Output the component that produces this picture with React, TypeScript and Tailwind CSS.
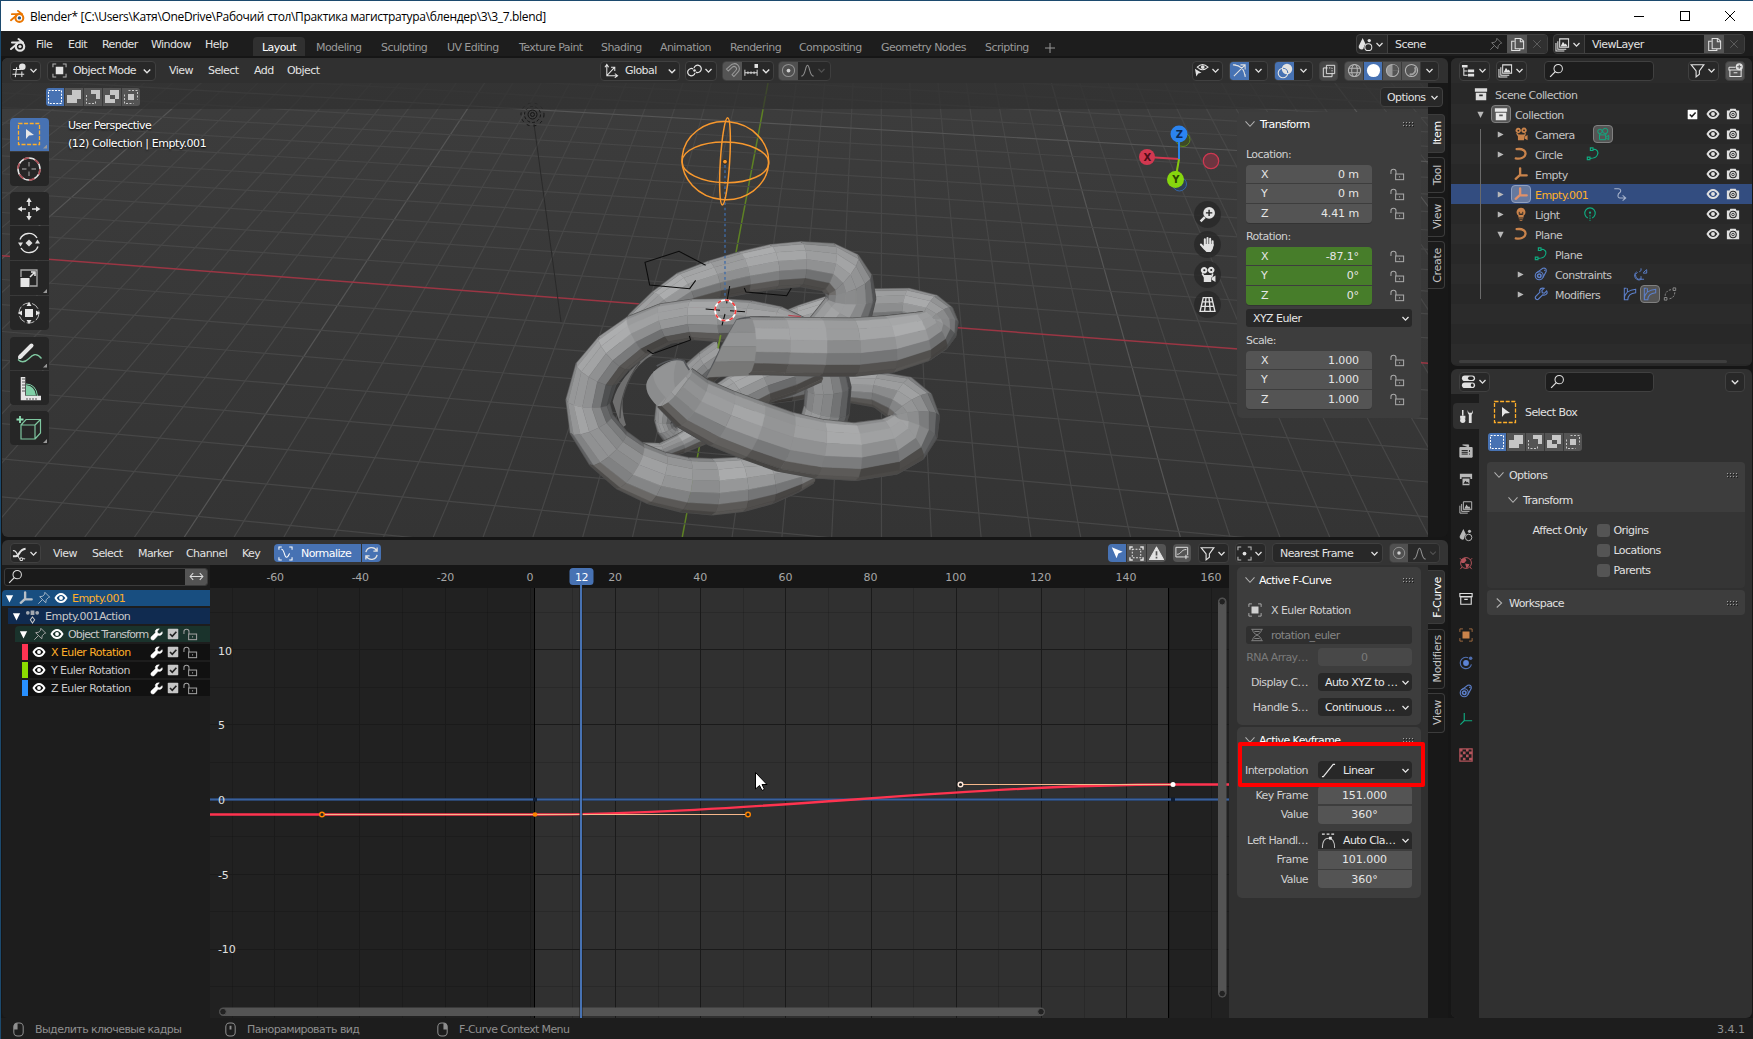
import React from "react";

type Kids = { children?: React.ReactNode };

/* ---------- icons (16 unit grid) ---------- */
const ICONS: Record<string, React.ReactNode> = {
  chev: <path d="M4.300 6.200 8 10l3.700-3.800" strokeWidth="1.600" />,
  chevBig: <path d="M2 4.500l6 6.500 6-6.500" strokeWidth="1.400" />,
  chevRight: <path d="M5 2l6.500 6L5 14" strokeWidth="1.400" />,
  triDown: <path d="M3.500 4h9L8 13z" fill="currentColor" stroke="none" />,
  triRight: <path d="M4 3.500v9L12.500 8z" fill="currentColor" stroke="none" />,
  eye: (
    <>
      <path d="M1.800 8C3.600 4.700 5.600 3.400 8 3.400s4.400 1.300 6.200 4.600c-1.800 3.300-3.800 4.600-6.200 4.600S3.600 11.300 1.800 8Z" strokeWidth="2.200" />
      <circle cx="8" cy="8" r="2.200" fill="currentColor" stroke="none" />
    </>
  ),
  photo: (
    <>
      <path d="M1 4h3l1-2h6l1 2h3v10H1z" fill="currentColor" stroke="none" />
      <circle cx="8" cy="8.600" r="3.700" stroke="#282828" strokeWidth="1.300" />
      <circle cx="8" cy="8.600" r="1.500" stroke="#282828" strokeWidth="1" />
    </>
  ),
  lock: (
    <>
      <rect x="6" y="7.500" width="8.500" height="6" />
      <path d="M1 7.500V5q0-2.500 2.700-2.500T6.400 5v2.500M10.200 9.800v1.500" />
    </>
  ),
  search: (
    <>
      <circle cx="9.800" cy="6" r="4.500" />
      <path d="M6.700 9.200 1.200 14.800" strokeWidth="1.300" />
    </>
  ),
  pin: <path d="M9 1.500 14.500 7l-1.500.5-2.500 2.500-.5 3.500L3 6.500l3.500-.5L8.800 3.500ZM6 10 1.500 14.500" />,
  copy: (
    <>
      <path d="M5.500 1.500h6l3 3v8h-9z" />
      <path d="M11 1.500v3.500h3.500M5 4.500H1.800v10h8.700v-1.700" />
    </>
  ),
  x: <path d="M3 3l10 10M13 3 3 13" />,
  swap: <path d="M1.500 8h13M4.500 4.500 1.200 8l3.300 3.500M11.500 4.500 14.800 8l-3.300 3.500" />,
  funnel: <path d="M1.200 1.800h13.600L10 8.500V12l-3.500 2.800V8.500z" strokeWidth="1.200" />,
  tree: (
    <>
      <path d="M3 5v8h4M3 8.500h4" />
      <path d="M1 2h6v2.800H1zM7.500 7H14v2.800H7.500zM7.500 11.500H14v2.800H7.500z" fill="currentColor" stroke="none" />
    </>
  ),
  stack: (
    <>
      <path d="M5 2h9.500v9H5zM3 4.500V13h9M1 6.500V15h9" />
      <path d="M6 10l2.500-5 2 3 1-1 2 3z" fill="currentColor" stroke="none" />
    </>
  ),
  scene: (
    <>
      <path d="M5 1 .8 9.500q-.5 3.500 3.500 3.800Q6 13.300 6 11.500 6.500 8.500 8 7.500z" fill="currentColor" stroke="none" />
      <circle cx="11" cy="10.800" r="3.700" />
      <circle cx="12" cy="3.800" r="1.800" fill="currentColor" stroke="none" />
    </>
  ),
  view3d: (
    <>
      <path d="M1 7h9M0.500 12h12.500M5 4.500 3.500 15M10.500 9v6" />
      <circle cx="11" cy="4" r="3.500" fill="currentColor" stroke="none" />
    </>
  ),
  object: (
    <>
      <rect x="4" y="4" width="8" height="8" fill="currentColor" stroke="none" />
      <path d="M1 4.500V1h3.500M11.500 1H15v3.500M15 11.500V15h-3.500M4.500 15H1v-3.500" opacity=".75" />
    </>
  ),
  axes: <path d="M3 14V2M1 4.500 3 1.500l2 3M3 13.500h11M11.500 11.300l3 2.200-3 2.200M3 13.500 11 5M7.500 4.500H11.500V8.500" />,
  pivot: (
    <>
      <path d="M8.500 10.500a3.900 3.900 0 1 1-2-4.200M7.500 5.500a3.900 3.900 0 1 1 2 4.200" strokeWidth="1.300" />
      <circle cx="8" cy="8" r="1.400" fill="currentColor" stroke="none" />
    </>
  ),
  magnet: <path d="M1.500 6.500 6 2.500a5.300 5.300 0 0 1 8 7l-4.500 5-2-2 4-4.500a2.500 2.500 0 0 0-3.700-3.500L3.500 8.500z" />,
  snap: (
    <>
      <path d="M1 6.500v7M1 10h14M4.500 8.500v3M8 8.500v3M11.500 8.500v3M15 6.500v7" />
      <rect x="12" y="0" width="4" height="4.500" fill="currentColor" stroke="none" />
    </>
  ),
  prop: (
    <>
      <circle cx="8" cy="8" r="6.500" opacity=".5" />
      <circle cx="8" cy="8" r="2" fill="currentColor" stroke="none" />
    </>
  ),
  curveA: <path d="M1.500 14C6 14 5.500 2.500 8 2.500S10 14 14.500 14" />,
  visib: (
    <>
      <path d="M3.500 4.500Q9 -1.500 15 4.500 9 10 3.500 4.500Z" />
      <circle cx="9.300" cy="4.300" r="2" fill="currentColor" stroke="none" />
      <path d="M1 6l7 4.500-3.500.8L2.500 14.500z" fill="currentColor" stroke="none" />
    </>
  ),
  gizmo: <path d="M2 2c7 .5 11 4.500 12 12M2 14 14 2M9 2h5v5M1 2h3M14 12v3" />,
  overlay: (
    <>
      <circle cx="6" cy="10" r="4.800" />
      <circle cx="10" cy="6" r="5.200" fill="currentColor" stroke="none" />
      <path d="M6 5.300A4.800 4.800 0 0 1 10.800 10" stroke="#4772b3" />
    </>
  ),
  xray: (
    <>
      <path d="M5 1.500h9.500V11H5zM5 4.500H1.500v10h10V11" />
      <path d="M5 4.500h6.500V11" strokeDasharray="1.500 1.500" />
    </>
  ),
  wire: (
    <>
      <circle cx="8" cy="8" r="6.500" />
      <ellipse cx="8" cy="8" rx="3" ry="6.500" />
      <path d="M2 5.500h12M2 10.500h12" />
    </>
  ),
  solid: <circle cx="8" cy="8" r="7" fill="currentColor" stroke="none" />,
  matp: (
    <>
      <circle cx="8" cy="8" r="6.500" />
      <path d="M8 1.500A6.500 6.500 0 0 0 8 14.500L8 8h6.500A6.500 6.500 0 0 0 8 1.500" fill="currentColor" opacity=".7" stroke="none" />
      <path d="M8 8V1.500A6.500 6.500 0 0 1 14.500 8z" fill="#555" stroke="none" />
    </>
  ),
  rend: (
    <>
      <circle cx="8" cy="8" r="6.500" />
      <path d="M11.500 4.500A5 5 0 0 1 6 12" opacity=".8" strokeWidth="2" />
    </>
  ),
  coll: (
    <>
      <path d="M1 1.500h14v4H1z" fill="currentColor" stroke="none" />
      <path d="M2 6.700h12V15H2zM6 8.500v2h4v-2z" fill="currentColor" fillRule="evenodd" stroke="none" />
    </>
  ),
  collLine: <path d="M1 1.700h14v3.600H1zM2 5.500h12V14H2zM6 8.500h4" strokeWidth="1.300" />,
  newColl: (
    <>
      <path d="M1 4.500h7M1 4.500v3h14M2 7.500h12v7H2zM6 10.500h4" />
      <circle cx="12" cy="4" r="3.800" fill="currentColor" stroke="none" />
      <path d="M12 1.800v4.400M9.800 4h4.400" stroke="#555" />
    </>
  ),
  cam: (
    <>
      <path d="M4.900.9a3.100 3.100 0 1 1-.1 0zM11.500.7a3.100 3.100 0 1 1-.1 0zM4.500 8.500h7V15h-7zM12 11l3.500-2v6L12 13z" fill="currentColor" stroke="none" />
      <path d="M3 7l2 3h7l1-3" strokeWidth="1.500" />
      <circle cx="5" cy="4" r="1" fill="#222" stroke="none" />
      <circle cx="11.500" cy="3.800" r="1" fill="#222" stroke="none" />
    </>
  ),
  camLine: (
    <>
      <circle cx="4.500" cy="5" r="2.500" />
      <circle cx="10.500" cy="4.500" r="3" />
      <path d="M4 9h7v5.500H4zM11.500 11.500l3-2v5l-3-2M3 7.500 5 9M12 7.500 11 9" />
    </>
  ),
  curve: <path d="M3 2.500c7-1 11 2 10 6S7 14 2 13" strokeWidth="2.600" strokeLinecap="round" />,
  curveLine: <path d="M8 2.500c5 0 6.500 3 5 6.500S8 13 5 13M5 1h3v3H5zM1.500 11.500h3v3h-3z" strokeWidth="1.300" />,
  empty: <path d="M7 1.500V9l-5 4.500M7 9.500h7.500" strokeWidth="2.700" strokeLinecap="round" strokeLinejoin="round" />,
  emptyLine: <path d="M6 1v9L1.500 14.500M6 10h9" strokeWidth="1.300" />,
  action: <path d="M1.500 2h4.500c3.500 0 3.500 3.500 1.500 4.500s-3 6 .5 6h6M11 9.500l3.500 3-3.500 3" strokeWidth="1.200" />,
  bulb: (
    <>
      <path d="M8 .8a5.200 5.200 0 0 1 3 9.300V12H5v-1.900A5.200 5.200 0 0 1 8 .8ZM5.500 13h5v1h-5zM6.500 14.800h3v1h-3z" fill="currentColor" stroke="none" />
      <path d="M6 5.500v3h4v-3M8 8.500V7" stroke="#282828" />
    </>
  ),
  bulbLine: (
    <>
      <path d="M5.500 12.500A6 6 0 1 1 10.500 12.500" strokeWidth="1.300" />
      <circle cx="8" cy="6.500" r="1.300" fill="currentColor" stroke="none" />
      <path d="M8 9v7" strokeDasharray="2 1" />
    </>
  ),
  constraint: (
    <>
      <circle cx="6" cy="10" r="4.600" strokeWidth="1.300" />
      <circle cx="6" cy="10" r="2" strokeWidth="1.800" />
      <path d="M2.500 7 10 1.500q4.500-1 4 3.500L10.300 12M12.300 3v1.500" strokeWidth="1.300" />
    </>
  ),
  wrench: (
    <path d="M14.500 4.500 12 7 9.500 6.500 9 4l2.500-2.500Q7.500.5 6.500 3.500q0 1.500.3 2.300L1.800 11q-.8 1.500.4 2.800 1.300 1 2.700.2L10 9q3.500.8 4.800-1.500.5-1.500-.3-3Z" strokeWidth="1.300" />
  ),
  wrenchF: (
    <path d="M15 4.500 12 7 9.500 6.500 9 4l2.500-3Q7.500.5 6.500 3.500q0 1.500.3 2.300L1.300 11q-.8 1.500.4 3.300 1.800 1 3.200.2L10 9q3.500.8 4.800-1.500.7-1.500.2-3Z" fill="currentColor" stroke="currentColor" strokeWidth=".600" />
  ),
  check: (
    <>
      <rect x="1" y="1" width="14" height="14" rx="1" fill="currentColor" stroke="none" />
      <path d="M4 8l3 3 5.500-6" stroke="#222" strokeWidth="2.200" />
    </>
  ),
  follow: <path d="M8 1.500a3 3 0 0 1-2 4M3 5.500a5 5 0 0 0 5.500 8.500M14.500 3v4h-4M10.500 6.500l4-3.500M8 10.500v3.500h3.500M4 6a4 4 0 0 0 4 7.500" />,
  bend: <path d="M4 1.500H1.500v13M1.500 14.500C1.500 7 7 3 14.500 2.500v4C9 7 5.500 10 5.500 14.500zM5 1.500v4" strokeWidth="1.200" />,
  dots: (
    <>
      <path d="M1.500 12h3v3h-3zM11.500 1h3v3h-3z" />
      <path d="M13.500 6c0 4.500-3 7.500-7 7.500M2.500 10C2.500 6 6 3 10 3" strokeDasharray="2.500 1.500" />
    </>
  ),
  toolset: (
    <>
      <path d="M4 1v6M2 8h4v1.500H2z" strokeWidth="1.600" />
      <circle cx="4" cy="12" r="2.800" fill="currentColor" stroke="none" />
      <path d="M9 1q0 4 1.500 5v9h3V6Q15 5 15 1l-1.500 3h-3z" fill="currentColor" stroke="none" />
    </>
  ),
  renderP: (
    <>
      <path d="M4 1h7v3M1 4h14v11H1z" fill="currentColor" stroke="currentColor" />
      <path d="M3 7.500h7M3 9.500h7M3 11.500h7M12 7v2M12 11v1" stroke="#1d1d1d" />
    </>
  ),
  output: (
    <>
      <path d="M1 2h14v4H1zM1 5h2v3H1zM13 5h2v3h-2zM4 7.500h8V15H4z" fill="currentColor" stroke="none" />
      <path d="M5 13.500 7.500 10l1.500 2 1-.800 1.500 2.300z" fill="#1d1d1d" stroke="none" />
    </>
  ),
  world: (
    <>
      <circle cx="8" cy="8" r="6.200" />
      <path d="M3 3.500l4-1.500 1.500 3L6 8H3.500L2 7zM7 8.500l5 1-1.500 3-2 1.500z" fill="currentColor" stroke="none" />
      <path d="M1 2.500l2 2M15 2.500 13 4.500M3.500 12.500 1.500 15M12.500 12.500l2 2.500" />
    </>
  ),
  physics: (
    <>
      <path d="M10.500 2A6.500 6.500 0 1 0 14.200 9.500" opacity=".8" strokeWidth="1.300" />
      <circle cx="8" cy="8" r="3.300" fill="currentColor" stroke="none" />
      <circle cx="13.300" cy="2.500" r="2" fill="currentColor" stroke="none" opacity=".8" />
    </>
  ),
  texture: (
    <>
      <rect x="1" y="1" width="14" height="14" strokeWidth="1.400" />
      <path d="M1 1h3v3H1zM8 1h3v3H8zM4.500 4h3v3h-3zM11.500 4H15v3h-3.500zM1 7.500h3v3H1zM8 7.500h3v3H8zM4.500 11h3v3h-3zM11.500 11H15v3h-3.500z" fill="currentColor" stroke="none" />
    </>
  ),
  props: (
    <>
      <rect x="1" y="1.500" width="14" height="6" rx="3" fill="currentColor" stroke="none" />
      <rect x="1" y="9" width="14" height="6" rx="3" fill="currentColor" stroke="none" />
      <rect x="7.500" y="2.700" width="6" height="3.600" rx="1.800" fill="#222" stroke="none" />
      <rect x="10.500" y="10.200" width="3" height="3.600" rx="1.500" fill="#222" stroke="none" />
    </>
  ),
  graph: (
    <>
      <path d="M1 11h3c4 0 3-7 10.500-8" strokeWidth="2.200" />
      <path d="M1 5c5-1 5 8 7.500 9M12 13l2 1" />
      <circle cx="10" cy="14" r="1.500" />
    </>
  ),
  norm: <path d="M1 4V1h3M12 1h3v3M15 12v3h-3M4 15H1v-3M3.500 3.500C7 3 6.500 12 9 12s2-3 3.500-4" />,
  refresh: <path d="M2 6.500A6.200 6.200 0 0 1 13.500 5M14 9.500A6.200 6.200 0 0 1 2.500 11M14 1.500V5.500H10M2 14.500v-4h4" strokeWidth="1.400" />,
  arrow: <path d="M2 1.500 14.500 6.500 9.500 8.500 7.500 14z" fill="currentColor" stroke="none" />,
  selBox: (
    <>
      <path d="M1 4V1h3M12 1h3v3M15 12v3h-3M4 15H1v-3" strokeWidth="1.500" />
      <rect x="3.500" y="3.500" width="9" height="9" strokeDasharray="2 1.500" />
    </>
  ),
  warn: (
    <>
      <path d="M8 1 15.500 14.500H.5z" fill="currentColor" stroke="currentColor" strokeLinejoin="round" />
      <path d="M8 5.500v4.500M8 11.500v1.800" stroke="#555" strokeWidth="1.800" />
    </>
  ),
  ghost: <path d="M1 1.500h13.500v9M1 1.500v11h9M2.500 9.500C7 9.500 7 4 13 4M12.500 10v5M10 12.500h5.500" />,
  dotBox: (
    <>
      <path d="M1 4.500V1h3.500M11.500 1H15v3.500M15 11.500V15h-3.500M4.500 15H1v-3.500" opacity=".8" />
      <circle cx="8" cy="8" r="2" fill="currentColor" stroke="none" />
    </>
  ),
  rna: <path d="M1.500 1.500h13M1.500 14.500h13M3 2c0 6 10 6 10 12M13 2C13 8 3 8 3 14M5 4h6M5 12h6" />,
  linear: <path d="M1 14.500h1.500L13 1.500h2" strokeWidth="1.300" />,
  auto: (
    <>
      <path d="M1.500 16C1.500 8 4.500 5.500 8 5.500s6.500 2.500 6.500 10.500" opacity=".8" />
      <path d="M1 1.200h3M6 1.200h3M11 1.200h3" strokeWidth="1.400" />
      <rect x="8.500" y="4" width="3" height="3" fill="currentColor" stroke="none" />
    </>
  ),
  blender: (
    <>
      <circle cx="10" cy="9.500" r="4.200" strokeWidth="2.200" />
      <circle cx="10" cy="9.500" r="1.600" fill="currentColor" stroke="none" />
      <path d="M8.500 2 13 5.500M2 5.500h8M1 12l6-5" strokeWidth="2" strokeLinecap="round" />
    </>
  ),
  actionIc: (
    <>
      <path d="M1 4a2 2 0 1 1 4 0 2 2 0 1 1-4 0M11 4a2 2 0 1 1 4 0 2 2 0 1 1-4 0M6 1.500h4v5H6z" fill="currentColor" stroke="none" opacity=".8" />
      <path d="M8 8.500l2.300 3L8 15l-2.300-3.500z" />
    </>
  ),
  mouseL: (
    <>
      <rect x="3" y="1" width="10" height="14" rx="4" />
      <path d="M3 8V4q0-3 4-3v7z" fill="currentColor" stroke="none" />
    </>
  ),
  mouseM: (
    <>
      <rect x="3" y="1" width="10" height="14" rx="4" />
      <path d="M7 4h2v4H7z" fill="currentColor" stroke="none" />
    </>
  ),
  mouseR: (
    <>
      <rect x="3" y="1" width="10" height="14" rx="4" />
      <path d="M13 8V4q0-3-4-3v7z" fill="currentColor" stroke="none" />
    </>
  ),
};

function Ic({ n, className = "size-[15px]" }: { n: string; className?: string }) {
  return (
    <svg viewBox="0 0 16 16" fill="none" stroke="currentColor" strokeWidth="1.100" className={`shrink-0 ${className}`}>
      {ICONS[n]}
    </svg>
  );
}

function Grip() {
  return (
    <svg viewBox="0 0 11 5" className="ml-auto mr-[7px] h-[5px] w-[11px] shrink-0" shapeRendering="crispEdges">
      {[0, 3, 6, 9].map((x) => (
        <g key={x}>
          <path d={`M${x + 1} 1h1v1h-1zM${x + 1} 4h1v1h-1z`} fill="#1c1c1c" />
          <path d={`M${x} 0h1v1h-1zM${x} 3h1v1h-1z`} fill="#a0a0a0" />
        </g>
      ))}
    </svg>
  );
}

function Box({ className = "", children }: Kids & { className?: string }) {
  return (
    <div className={`flex shrink-0 items-center overflow-hidden rounded-[4px] border border-[#404040] bg-[#282828] ${className}`}>{children}</div>
  );
}

function IconDrop({ n, className = "w-[31px]" }: { n: string; className?: string }) {
  return (
    <Box className={`h-5 justify-center ${className}`}>
      <Ic n={n} />
      <Ic n="chev" className="size-[13px]" />
    </Box>
  );
}

/* ---------- viewport scene ---------- */
const HORIZON = -516.7;
const GRID_X = Array.from({ length: 75 }, (_, i) => i - 42).map((k) => ({
  k,
  x2: 682.3 + 49.8 * k,
}));
const GRID_Y = Array.from({ length: 30 }, (_, i) => i - 12).map((m) => {
  const d = 1 / (0.0012092 + 0.00003545 * m);
  const y = HORIZON + d;
  const x = 682.3 - 0.1888 * (y - 537);
  const s = d / (x + 10258);
  return { m, y1: y + (0 - x) * s, y2: y + (1440 - x) * s };
});

type P3 = [number, number, number];

function spline(pts: P3[], step: number): P3[] {
  const out: P3[] = [];
  for (let i = 0; i < pts.length - 1; i++) {
    const a = pts[Math.max(0, i - 1)];
    const b = pts[i];
    const c = pts[i + 1];
    const d = pts[Math.min(pts.length - 1, i + 2)];
    for (let s = 0; s < 12; s++) {
      const t = s / 12;
      const f = (k: number) =>
        0.5 * (2 * b[k] + (c[k] - a[k]) * t + (2 * a[k] - 5 * b[k] + 4 * c[k] - d[k]) * t * t + (3 * b[k] - a[k] - 3 * c[k] + d[k]) * t * t * t);
      out.push([f(0), f(1), f(2)]);
    }
  }
  out.push(pts[pts.length - 1]);
  const res: P3[] = [out[0]];
  let acc = 0;
  let dir = Math.atan2(out[1][1] - out[0][1], out[1][0] - out[0][0]);
  for (let i = 1; i < out.length; i++) {
    const dx = out[i][0] - out[i - 1][0];
    const dy = out[i][1] - out[i - 1][1];
    acc += Math.hypot(dx, dy);
    const now = Math.atan2(dy, dx);
    let turn = Math.abs(now - dir);
    if (turn > Math.PI) turn = 2 * Math.PI - turn;
    if (acc >= step || turn > 0.42) {
      res.push(out[i]);
      acc = 0;
      dir = now;
    }
  }
  if (acc > step * 0.2) res.push(out[out.length - 1]);
  return res;
}

type TubeProps = { pts: P3[]; step?: number; bulge?: number; dim?: number; seed?: number; from?: (p: P3) => boolean };

function Tube({ pts, step = 70, bulge = 0.28, dim = 0, seed = 1, from }: TubeProps) {
  const c = spline(pts, step);
  const start = from ? Math.max(0, c.findIndex(from)) : 0;
  const N = 7;
  const rings = c.map((p, i) => {
    const a = c[Math.max(0, i - 1)];
    const b = c[Math.min(c.length - 1, i + 1)];
    const l = Math.hypot(b[0] - a[0], b[1] - a[1]) || 1;
    const tx = (b[0] - a[0]) / l;
    const ty = (b[1] - a[1]) / l;
    return Array.from({ length: N + 1 }, (_, j) => {
      const th = (Math.PI * j) / N;
      const co = Math.cos(th);
      const si = Math.sin(th);
      return { x: p[0] + -ty * p[2] * co + tx * p[2] * bulge * si, y: p[1] + tx * p[2] * co + ty * p[2] * bulge * si, nx: -ty, ny: tx };
    });
  });
  const segs: React.ReactNode[] = [];
  for (let i = start; i < rings.length - 1; i++) {
    const e = (j: number) => `${rings[i][j].x.toFixed(1)},${rings[i][j].y.toFixed(1)} ${rings[i + 1][j].x.toFixed(1)},${rings[i + 1][j].y.toFixed(1)}`;
    segs.push(
      <g key={`e${i}`} fill="none" stroke="#4c4c4c" strokeWidth="5">
        <polyline points={e(0)} />
        <polyline points={e(N)} />
      </g>,
    );
    for (let j = 0; j < N; j++) {
      const th = (Math.PI * (j + 0.5)) / N;
      const q = rings[i][j];
      const nx = q.nx * Math.cos(th);
      const ny = q.ny * Math.cos(th);
      const nz = Math.sin(th);
      const li = Math.max(0, -0.3 * nx - 0.55 * ny + 0.78 * nz);
      const wob = ((i * 5 + seed) % 3) * 6 - 6 + (((i * 7 + j * 3 + seed * 5) % 4) - 1.5) * 2;
      const v = Math.round(Math.min(184, 78 + 88 * Math.pow(li, 0.95) + wob - dim));
      const pt = [q, rings[i][j + 1], rings[i + 1][j + 1], rings[i + 1][j]].map((o) => `${o.x.toFixed(1)},${o.y.toFixed(1)}`).join(" ");
      const col = ny > 0.5 ? `rgb(${v},${v - 2},${v - 4})` : `rgb(${v},${v + 1},${v + 2})`;
      segs.push(<polygon key={`${i}-${j}`} points={pt} fill={col} stroke={col} strokeWidth="1.200" />);
    }
  }
  return <g>{segs}</g>;
}

const UPPER: P3[] = [
  [690, 716, 32], [780, 690, 42], [860, 665, 48], [1000, 655, 58], [1080, 651, 57], [1140, 660, 58], [1180, 682, 62], [1192, 708, 62], [1165, 732, 70],
  [1090, 755, 82], [980, 770, 86], [860, 771, 87], [740, 769, 86], [628, 767, 85],
];
const LOWER: P3[] = [
  [910, 893, 40], [1000, 897, 50], [1055, 910, 64], [1095, 935, 72], [1118, 970, 77], [1118, 1015, 77], [1090, 1050, 82],
  [1020, 1077, 85], [900, 1084, 86], [745, 1058, 90], [630, 1018, 90], [545, 985, 88], [450, 935, 82], [405, 893, 76],
];

function SceneView() {
  const capL = [[590, 690], [568, 728], [545, 770], [525, 815], [500, 862]];
  const capR = [[690, 683], [710, 725], [715, 770], [710, 815], [690, 854]];
  const capC = ["#8b8c8d", "#939495", "#898a8a", "#777776"];
  return (
    <svg viewBox="2 58 1426 479" className="absolute left-0 top-0 h-[479px] w-[1426px]">
      <defs>
        <linearGradient id="bg" x1="0" y1="0" x2="0" y2="1">
          <stop offset="0" stopColor="#3d3d3d" />
          <stop offset="1" stopColor="#343434" />
        </linearGradient>
      </defs>
      <rect x="2" y="58" width="1426" height="479" fill="url(#bg)" />
      {GRID_X.map(({ k, x2 }) => (
        <line key={k} x1="881.200" y1={HORIZON} x2={x2} y2="537" strokeWidth={k === 0 ? 1.5 : 1.2} stroke={k === 0 ? "#5e8224" : k % 10 === 0 ? "#565656" : "#474747"} />
      ))}
      {GRID_Y.map(({ m, y1, y2 }) => (
        <line key={m} x1="0" y1={y1} x2="1440" y2={y2} strokeWidth={m === 0 ? 1.5 : 1.2} stroke={m === 0 ? "#9b3644" : m % 10 === 0 ? "#565656" : "#474747"} />
      ))}
      <path d="M534 124 L561 322" stroke="#2a2a2a" strokeWidth="1" fill="none" />
      <g fill="none" stroke="#161616" strokeWidth="1">
        <circle cx="532.500" cy="114.500" r="2" />
        <circle cx="532.500" cy="114.500" r="4.500" />
        <circle cx="532.500" cy="114.500" r="8" strokeDasharray="3 2" />
        <circle cx="532.500" cy="114.500" r="11.500" strokeDasharray="3 4" />
      </g>
      <g transform="translate(540 90) scale(.33333)">
        <path d="M335 785Q235 860 218 935L245 1015 258 1005Q235 940 262 880T345 790Z" fill="#6f6f6f" />
        <path d="M300 815Q240 900 240 985" stroke="#4c4c4c" strokeWidth="4" fill="none" />
        <Tube pts={UPPER} bulge={-0.25} step={100} seed={3} />
        <Tube pts={[[250, 775, 40], [310, 700, 50], [380, 638, 52], [450, 592, 55], [560, 560, 60], [680, 533, 66], [790, 522, 67], [860, 530, 72], [905, 553, 76], [930, 595, 74], [930, 645, 74], [905, 690, 78], [870, 735, 78]]} step={82} />
        <Tube pts={[[560, 790, 50], [480, 845, 46], [430, 905, 50], [385, 960, 40], [374, 1000, 28], [395, 1035, 28], [450, 1040, 28]]} dim={10} step={60} />
        <Tube pts={[[300, 1088, 30], [370, 1083, 24], [440, 1052, 30], [520, 1010, 36], [600, 960, 36]]} dim={6} step={60} />
        <Tube pts={[[650, 930, 12], [720, 915, 22], [800, 890, 34]]} dim={18} step={50} />
        <Tube pts={LOWER} bulge={-0.25} step={98} seed={4} />
        <Tube pts={[[852, 830, 64], [865, 900, 68], [860, 960, 68], [835, 1040, 66]]} step={62} dim={8} />
        <Tube pts={[[820, 820, 60], [730, 860, 60], [640, 890, 62], [540, 950, 62], [440, 1010, 40]]} bulge={-0.25} dim={3} step={80} />
        <Tube pts={[[800, 720, 30], [730, 700, 45], [640, 692, 58], [550, 691, 64], [430, 690, 59], [340, 714, 62], [250, 765, 65], [172, 845, 67], [143, 935, 65], [160, 1015, 70], [215, 1085, 75], [290, 1140, 79], [380, 1173, 81], [470, 1189, 82], [550, 1189, 84], [640, 1178, 77], [730, 1162, 62], [810, 1140, 40]]} step={82} seed={2} />
        <path d="M500 862 545 770 590 690Q610 679 690 682" fill="none" stroke="#55575a" strokeWidth="5" />
        {capC.map((c, i) => (
          <polygon key={c} points={[capL[i], capR[i], capR[i + 1], capL[i + 1]].map((p) => p.join(",")).join(" ")} fill={c} stroke={c} />
        ))}
        <Tube pts={UPPER} bulge={-0.25} step={100} seed={3} from={(p) => p[1] > 690 && p[0] > 1100} />
        <Tube pts={LOWER} bulge={-0.25} step={98} seed={4} from={(p) => p[1] > 960 && p[0] > 1050} />
        <path d="M352 948Q308 905 322 872 345 826 412 806L432 812Q445 850 458 838L405 893Z" fill="#8b8c8d" />
        <path d="M412 806Q395 850 405 893L380 925Q335 880 340 845Z" fill="#939495" />
        <path d="M350 828Q400 800 432 812 438 826 448 840" fill="none" stroke="#55575a" strokeWidth="5" />
        <g fill="none" stroke="#0c0c0c" strokeWidth="3.200">
          <path d="M497 526 417 484 315 517 329 585 449 596 467 571" />
          <path d="M613 594 618 606 740 617 754 594M322 780 338 791 452 750 448 738" />
          <path d="M497 657 540 661M570 662 615 665M569 588 560 640M555 672 546 706" />
        </g>
        <path d="M745 676 782 680" stroke="#b54a55" strokeWidth="4" />
        <path d="M542 735 534 775" stroke="#6c8f2e" strokeWidth="5" />
        <path d="M555 225V628" stroke="#3f6ca8" strokeWidth="4" strokeDasharray="8 8" />
        <circle cx="556" cy="661" r="31" fill="none" stroke="#fff" strokeWidth="5" />
        <circle cx="556" cy="661" r="31" fill="none" stroke="#f33b3b" strokeWidth="5" strokeDasharray="12 12" />
        <g fill="none" stroke="#f7982e" strokeWidth="4.500">
          <ellipse cx="556" cy="212" rx="130" ry="117" transform="rotate(5 556 212)" />
          <ellipse cx="556" cy="217" rx="130" ry="61" transform="rotate(1 556 217)" />
          <ellipse cx="555" cy="214" rx="14" ry="131" transform="rotate(3.500 555 214)" />
        </g>
        <circle cx="555" cy="215" r="7" fill="#f7982e" stroke="#111" strokeWidth="2" />
      </g>
      <rect x="2" y="83" width="1426" height="26" fill="#303030" opacity=".72" />
      {/* orientation gizmo */}
      <g fontFamily="DejaVu Sans" fontSize="10" fontWeight="bold" textAnchor="middle">
        <circle cx="1183" cy="139.500" r="7" fill="#3d4a25" stroke="#5f8a1d" />
        <circle cx="1179.500" cy="184" r="7" fill="#2f3f55" stroke="#3465a4" />
        <circle cx="1211" cy="161" r="7.700" fill="#6d3540" stroke="#cc3850" strokeWidth="1.300" />
        <path d="M1147 157 1179 159" stroke="#d23850" strokeWidth="2" />
        <path d="M1175.500 179 1179 159" stroke="#86c810" strokeWidth="2" />
        <path d="M1179 134V159" stroke="#2b84e8" strokeWidth="2" />
        <circle cx="1179" cy="134" r="8.500" fill="#2b84f0" />
        <circle cx="1147" cy="157" r="8" fill="#d23850" />
        <circle cx="1175.500" cy="179.500" r="8.500" fill="#86d60e" />
        <text x="1179" y="137.700" fill="#0b2a55">Z</text>
        <text x="1147" y="160.700" fill="#4d0d18">X</text>
        <text x="1175.500" y="183.200" fill="#2a4400">Y</text>
      </g>
    </svg>
  );
}

/* ---------- shared widgets ---------- */
function SelectModes() {
  return (
    <div className="flex h-[18px] w-[94px] shrink-0 gap-px overflow-hidden rounded-[3px] bg-[#3a3a3a]">
      {[0, 1, 2, 3, 4].map((i) => (
        <div key={i} className={`flex w-[18px] items-center justify-center ${i === 0 ? "bg-[#4772b3] text-white" : "bg-[#545454] text-[#c6c6c6]"}`}>
          <svg viewBox="0 0 14 14" className="size-[14px]" fill="none" stroke="currentColor">
            {i === 0 && <path d="M.5.500h13v13H.500z" strokeDasharray="2 1.250" />}
            {i === 1 && <path d="M5 0h9v9h-4v4H0V5h5z" fill="currentColor" stroke="none" />}
            {i === 2 && (
              <>
                <path d="M5 0h9v9h-4V4H5z" fill="currentColor" stroke="none" />
                <path d="M.5 5v8.500h9V10" strokeDasharray="2 1.500" />
              </>
            )}
            {i === 3 && <path d="M5 0h9v9h-4v4H0V5h5zM5 5v4h5V5z" fillRule="evenodd" fill="currentColor" stroke="none" />}
            {i === 4 && (
              <>
                <path d="M4.500.500h9v9M.500 4.500v9h9" strokeDasharray="2 1.500" />
                <path d="M4 4h6v6H4z" fill="currentColor" stroke="none" />
              </>
            )}
          </svg>
        </div>
      ))}
    </div>
  );
}

function SideTab({ label, h, active }: { label: string; h: string; active?: boolean }) {
  return (
    <div className={`flex w-[17px] items-center justify-center rounded-r-[4px] border border-l-0 border-[#3c3c3c] pl-[2px] ${active ? "bg-[#303030] text-white" : "bg-[#1b1b1b] text-[#c4c4c4]"} ${h}`}>
      <span className="rotate-180 whitespace-nowrap tracking-[-0.3px] [writing-mode:vertical-rl]">{label}</span>
    </div>
  );
}

function VecRows({ rows, green }: { rows: [string, string][]; green?: boolean }) {
  return (
    <div className="flex">
      <div className="flex w-[126px] flex-col gap-px overflow-hidden rounded-[4px] shadow-[0_1px_0_#333]">
        {rows.map(([a, b], i) => (
          <div key={a} className={`flex items-center justify-between pl-[15px] pr-[13px] text-[#e6e6e6] ${i === 0 ? "h-[18px]" : "h-[19px]"} ${green ? "bg-[#477d2a]" : "bg-[#545454]"}`}>
            <span>{a}</span>
            <span className="tracking-[-0.1px]">{b}</span>
          </div>
        ))}
      </div>
      <div className="ml-[18px] flex flex-col gap-px">
        {rows.map(([a]) => (
          <div key={a} className="flex h-[18.700px] items-center text-[#a8a8a8]">
            <Ic n="lock" />
          </div>
        ))}
      </div>
    </div>
  );
}

const TOOL_SHAPES: Record<string, React.ReactNode> = {
  select: (
    <>
      <rect x="1.500" y="1.500" width="21" height="21" stroke="#ffaf29" strokeDasharray="4 1.600" strokeWidth="1.300" />
      <path d="M9 7l8 6-5 .5-3 3.500z" fill="#e6e6e6" stroke="none" />
    </>
  ),
  cursor: (
    <>
      <circle cx="12" cy="12" r="11" strokeWidth="1.500" />
      <circle cx="12" cy="12" r="11" stroke="#a84b52" strokeDasharray="5.700 5.800" strokeWidth="1.700" />
      <path d="M12 5v4.500M12 14.500V19M5 12h4.500M14.500 12H19" stroke="#888" strokeWidth="1.300" />
    </>
  ),
  move: (
    <>
      <path d="M12 .500 9.300 5h5.400zM12 23.500 9.300 19h5.400zM.500 12 5 9.300v5.400zM23.500 12 19 9.300v5.400z" fill="#e6e6e6" stroke="none" />
      <path d="M12 5v4M12 15v4M5 12h4M15 12h4" strokeWidth="1.600" />
    </>
  ),
  rotate: (
    <>
      <path d="M3 8.500A9.500 9.500 0 0 1 20 7M21 15.500A9.500 9.500 0 0 1 4 17" strokeWidth="1.400" />
      <path d="M1 11.500h5l-2.500 4zM18 12.500h5L20.500 8.500zM12 8.500l3.500 3.500-3.500 3.500L8.500 12z" fill="#ddd" stroke="none" />
    </>
  ),
  scale: (
    <>
      <path d="M4 11V4h16v16h-7" stroke="#aaa" strokeWidth="1.300" />
      <rect x="3.500" y="12" width="9" height="9" fill="#e6e6e6" stroke="none" />
      <path d="M13 11l4-4M14 6h4v4" strokeWidth="1.500" />
    </>
  ),
  transform: (
    <>
      <circle cx="12" cy="12" r="10" strokeDasharray="8 2" stroke="#bbb" />
      <rect x="8" y="8" width="8" height="8" fill="#e6e6e6" stroke="none" />
      <path d="M12 1l-2.500 4h5zM12 23l-2.500-4h5zM1 12l4-2.500v5zM23 12l-4-2.500v5z" fill="#e6e6e6" stroke="none" />
    </>
  ),
  annotate: (
    <>
      <path d="M3 16 14.500 4.500" strokeWidth="4" strokeLinecap="round" />
      <path d="M1 18.500 3 13l3 3z" fill="#e6e6e6" stroke="none" />
      <path d="M1 18.500c4 4 8 2 11-1s7-7 12.500 0" stroke="#7fc7a0" strokeWidth="1.300" />
    </>
  ),
  measure: (
    <>
      <path d="M6 1v21h18" strokeWidth="4.500" stroke="#e6e6e6" />
      <path d="M5 3h3M5 6h3M5 9h3M5 12h3M5 15h3M10 22v2M13 22v2M16 22v2M19 22v2" stroke="#333" strokeWidth=".800" />
      <path d="M9 9q9 1 10 10.500H9z" fill="#7fd0a6" stroke="none" />
      <path d="M9 8q10 0 11.500 12" stroke="#7fd0a6" />
    </>
  ),
  add: (
    <>
      <path d="M4 9h14v14H4zM4 9l5-5.500h14.500V17L18 23M18 9l5.500-5.500" stroke="#7fc7a0" strokeWidth="1.200" />
      <path d="M3 0v7M-.500 3.500h7" stroke="#8fe0b5" strokeWidth="1.800" />
    </>
  ),
};

function Tool({ n, h, active, corner }: { n: string; h: string; active?: boolean; corner?: boolean }) {
  return (
    <div className={`relative flex items-center justify-center ${h} ${active ? "bg-[#4772b3]" : "bg-[#262626]"}`}>
      <svg viewBox="0 0 24 24" className="-ml-[2px] size-6 overflow-visible" fill="none" stroke="#e6e6e6">
        {TOOL_SHAPES[n]}
      </svg>
      {corner && <div className="absolute bottom-[2px] right-[2px] size-[4px] bg-[#9a9a9a] [clip-path:polygon(100%_0,100%_100%,0_100%)]" />}
    </div>
  );
}

function NavBtn({ children }: Kids) {
  return (
    <div className="flex size-[27px] items-center justify-center rounded-full bg-[#282828]/80 text-[#e2e2e2]">
      <svg viewBox="0 0 16 16" className="size-[17px]" fill="none" stroke="currentColor">
        {children}
      </svg>
    </div>
  );
}

/* ---------- 3D viewport ---------- */
function Viewport() {
  return (
    <div className="relative ml-px h-[479px] w-[1446px] shrink-0 overflow-hidden rounded-[6px] bg-[#181818]">
      <SceneView />
      <div className="relative flex h-full flex-col">
        <div className="flex h-[25px] shrink-0 items-center bg-[#303030] pl-2 pr-[9px] text-[#e2e2e2]">
          <IconDrop n="view3d" />
          <Box className="ml-1.5 h-5 w-[109px] pl-1 pr-px">
            <Ic n="object" />
            <span className="ml-[6px] w-[66px] whitespace-nowrap">Object Mode</span>
            <Ic n="chev" className="ml-auto size-[14px]" />
          </Box>
          <span className="ml-[13px] w-[39px]">View</span>
          <span className="w-[46px]">Select</span>
          <span className="w-[33px]">Add</span>
          <span className="w-[313px]">Object</span>
          <Box className="h-5 w-[80px] gap-[6px] pl-[3px] text-[#e2e2e2]">
            <Ic n="axes" />
            <span className="w-[35px]">Global</span>
            <Ic n="chev" className="size-[14px]" />
          </Box>
          <IconDrop n="pivot" className="ml-[5px] w-[32px]" />
          <Box className="ml-[5px] h-5 w-[52px]">
            <div className="flex h-5 w-[19px] items-center justify-center bg-[#545454] text-[#9a9a9a]">
              <Ic n="magnet" />
            </div>
            <Ic n="snap" className="ml-0.5 size-[14px]" />
            <Ic n="chev" className="ml-[1px] size-[14px]" />
          </Box>
          <Box className="ml-[4px] h-5 w-[53px] opacity-90">
            <div className="flex h-5 w-[19px] items-center justify-center bg-[#545454]">
              <Ic n="prop" />
            </div>
            <Ic n="curveA" className="ml-0.5 size-[15px] text-[#9a9a9a]" />
            <Ic n="chev" className="size-[13px] text-[#555]" />
          </Box>
          <div className="ml-auto flex items-center">
            <IconDrop n="visib" />
            <Box className="ml-[6px] h-5 w-[39px]">
              <div className="flex h-5 w-[19px] items-center justify-center bg-[#4772b3]">
                <Ic n="gizmo" />
              </div>
              <Ic n="chev" className="ml-[3px] size-[13px]" />
            </Box>
            <Box className="ml-[6px] h-5 w-[39px]">
              <div className="flex h-5 w-[19px] items-center justify-center bg-[#4772b3]">
                <Ic n="overlay" className="size-4" />
              </div>
              <Ic n="chev" className="ml-[3px] size-[13px]" />
            </Box>
            <Box className="ml-[6px] h-5 w-[19px] justify-center !bg-[#474747]">
              <Ic n="xray" className="size-[14px]" />
            </Box>
            <Box className="ml-[6px] h-5 w-[95px]">
              {["wire", "solid", "matp", "rend"].map((n) => (
                <div key={n} className={`flex h-5 w-[19px] shrink-0 items-center justify-center border-r border-[#3a3a3a] ${n === "solid" ? "bg-[#4772b3] text-white" : "bg-[#545454] text-[#b4b4b4]"}`}>
                  <Ic n={n} />
                </div>
              ))}
              <Ic n="chev" className="ml-[2px] size-[13px]" />
            </Box>
          </div>
        </div>
        <div className="flex h-[26px] shrink-0 items-center justify-between pl-[44px] pr-[5px] pt-[2px]">
          <SelectModes />
          <Box className="h-5 w-[63px] justify-between pl-[6px] pr-px text-[#e2e2e2]">
            Options
            <Ic n="chev" className="size-[13px]" />
          </Box>
        </div>
        <div className="flex flex-1">
          <div className="ml-2 mt-[8.500px] flex w-[39px] flex-col gap-[6.500px]">
            <div className="flex flex-col gap-px overflow-hidden rounded-[4px]">
              <Tool n="select" h="h-[33px]" active corner />
              <Tool n="cursor" h="h-[34px]" />
            </div>
            <div className="flex flex-col gap-px overflow-hidden rounded-[4px]">
              <Tool n="move" h="h-[33px]" />
              <Tool n="rotate" h="h-[34px]" />
              <Tool n="scale" h="h-[34px]" corner />
              <Tool n="transform" h="h-[34px]" />
            </div>
            <div className="flex flex-col gap-px overflow-hidden rounded-[4px]">
              <Tool n="annotate" h="h-[33px]" corner />
              <Tool n="measure" h="h-[34px]" />
            </div>
            <div className="overflow-hidden rounded-[4px]">
              <Tool n="add" h="h-[34px]" corner />
            </div>
          </div>
          <div className="ml-[19px] mt-[7px] flex-1 text-white [text-shadow:0_1px_2px_#000]">
            <div className="flex h-[18px] items-center">User Perspective</div>
            <div className="flex h-[18px] items-center tracking-[-0.420px]">(12) Collection | Empty.001</div>
          </div>
          <div className="mr-[16.500px] mt-[91.500px] flex flex-col gap-[3.200px]">
            <NavBtn>
              <circle cx="9.500" cy="6.500" r="5.500" fill="currentColor" stroke="none" />
              <path d="M5.500 10.500 1.500 14.500" strokeWidth="2.200" />
              <path d="M9.500 3.500v6M6.500 6.500h6" stroke="#222" strokeWidth="1.300" />
            </NavBtn>
            <NavBtn>
              <path d="M5.500 8V3M8 7.500V1.800M10.500 8V2.500M12.800 9V5M1.800 8l3.500 4" strokeWidth="1.900" strokeLinecap="round" />
              <path d="M4.600 7.500h9.100q0 5-2.700 7.500H7Q5 13.500 4 10.500z" fill="currentColor" stroke="none" />
            </NavBtn>
            <NavBtn>{ICONS.cam}</NavBtn>
            <NavBtn>
              <path d="M4 1.500h8l3 13H1zM2.800 5.500h10.400M1.800 9.800h12.400M6.600 1.500l-1.300 13M9.400 1.500l1.300 13" strokeWidth="1.300" />
            </NavBtn>
          </div>
          <div className="mt-[3px] h-[306px] w-[184px] rounded-[5px] bg-[#3d3d3d] pl-[9px] text-[#d0d0d0]">
            <div className="flex h-[24px] items-center text-white">
              <Ic n="chevBig" className="-ml-0.5 size-[12px] text-[#b0b0b0]" />
              <span className="ml-[4px]">Transform</span>
              <Grip />
            </div>
            <div className="mt-[9px] flex h-[18px] items-center">Location:</div>
            <div className="mt-[2px]">
              <VecRows rows={[["X", "0 m"], ["Y", "0 m"], ["Z", "4.41 m"]]} />
            </div>
            <div className="mt-[4px] flex h-[18px] items-center">Rotation:</div>
            <div className="mt-[2px]">
              <VecRows rows={[["X", "-87.1°"], ["Y", "0°"], ["Z", "0°"]]} green />
            </div>
            <div className="mt-[4px] flex h-[18px] w-[166px] items-center justify-between rounded-[3px] bg-[#282828] pl-[7px] text-[#e6e6e6]">
              XYZ Euler
              <Ic n="chev" className="size-[13px]" />
            </div>
            <div className="mt-[4px] flex h-[18px] items-center">Scale:</div>
            <div className="mt-[2px]">
              <VecRows rows={[["X", "1.000"], ["Y", "1.000"], ["Z", "1.000"]]} />
            </div>
          </div>
          <div className="ml-[7px] flex w-5 flex-col gap-[4.500px] bg-[#181818] pt-[4.500px]">
            <SideTab label="Item" h="h-[39px]" active />
            <SideTab label="Tool" h="h-[35.500px]" />
            <SideTab label="View" h="h-[39.500px]" />
            <SideTab label="Create" h="h-[48px]" />
          </div>
        </div>
      </div>
    </div>
  );
}

/* ---------- graph editor ---------- */
const FRAMES = [-60, -40, -20, 0, 20, 40, 60, 80, 100, 120, 140, 160];
const fx = (f: number) => Math.round(529.8 + f * 4.26) + 0.5;

function GraphCanvas() {
  return (
    <svg viewBox="210 565 1019 453" className="h-[453px] w-[1019px] shrink-0">
      <rect x="210" y="565" width="1019" height="453" fill="#212121" />
      <rect x="535" y="588" width="633" height="430" fill="#303030" />
      <g stroke="#000" strokeOpacity=".13">
        {[-70, -50, -30, -10, 10, 30, 50, 70, 90, 110, 130, 150].map((f) => (
          <line key={f} x1={fx(f)} x2={fx(f)} y1="588" y2="1018" />
        ))}
        {[612.5, 687.5, 762.5, 836.5, 911.5, 986.5].map((y) => (
          <line key={y} x1="210" x2="1229" y1={y} y2={y} />
        ))}
      </g>
      <g stroke="#1a1a1a">
        {FRAMES.map((f) => (
          <line key={f} x1={fx(f)} x2={fx(f)} y1="588" y2="1018" />
        ))}
        {[649.5, 724.5, 799.5, 874.5, 949.5].map((y) => (
          <line key={y} x1="210" x2="1229" y1={y} y2={y} />
        ))}
      </g>
      <path d="M534.500 588V1018M1168.500 588V1018" stroke="#000" />
      <path d="M210 799.500H1229" stroke="#2b456d" strokeWidth="3" />
      <path d="M210 799.500H1229" stroke="#3a619d" strokeWidth="1" />
      <path d="M210 814.500H535C748 814.500 960.500 784.500 1173 784.500H1229" stroke="#ff334f" strokeWidth="2.300" fill="none" />
      <path d="M322 814.500H748M960.500 784.500H1173" stroke="#f5b78a" strokeWidth="1" />
      <rect x="533" y="797.500" width="4" height="4" fill="#0f1d33" />
      <rect x="1171" y="797.500" width="4" height="4" fill="#0f1d33" />
      <g fill="#222" stroke="#ff8500" strokeWidth="1.400">
        <circle cx="322" cy="814.500" r="2.300" />
        <circle cx="748" cy="814.500" r="2.300" />
        <circle cx="535" cy="814.500" r="1.600" fill="#ff8500" />
      </g>
      <circle cx="960.500" cy="784.500" r="2.300" fill="#222" stroke="#ffe9dc" strokeWidth="1.400" />
      <circle cx="1173" cy="784.500" r="2.500" fill="#fff" />
      <rect x="219" y="1007.500" width="826" height="8.500" rx="4.200" fill="#545454" />
      <circle cx="223" cy="1011.700" r="3.300" fill="#222" stroke="#545454" />
      <circle cx="1041" cy="1011.700" r="3.300" fill="#222" stroke="#545454" />
      <rect x="1218" y="597.500" width="8.500" height="400" rx="4.200" fill="#545454" />
      <circle cx="1222.200" cy="601.700" r="3.300" fill="#222" stroke="#545454" />
      <circle cx="1222.200" cy="993.500" r="3.300" fill="#222" stroke="#545454" />
      <rect x="210" y="565" width="1019" height="23" fill="#161616" />
      <path d="M581 585V1018" stroke="#1e1e1e" strokeWidth="4" opacity=".5" />
      <path d="M581 585V1018" stroke="#4772b3" strokeWidth="2" />
      <rect x="569.500" y="568" width="24" height="17" rx="3.500" fill="#4772b3" />
      <g fontFamily="DejaVu Sans" fontSize="11" fill="#a6a6a6" textAnchor="middle">
        {FRAMES.map((f) => (
          <text key={f} x={530 + f * 4.257 + (f < 0 ? 0.5 : 0)} y="581" letterSpacing={f < 0 ? "-0.3" : "0"}>
            {f}
          </text>
        ))}
        <text x="581.500" y="581" fill="#fff">12</text>
      </g>
      <g fontFamily="DejaVu Sans" fontSize="11" fill="#e0e0e0">
        {[["10", 655], ["5", 729], ["0", 804], ["-5", 879], ["-10", 953]].map(([t, y]) => (
          <text key={t} x="218" y={y} letterSpacing="-0.1">
            {t}
          </text>
        ))}
      </g>
      <path d="M755.500 772.500V789l4-3.500 2.500 5 2.500-1.200-2.500-4.800h5z" fill="#fff" stroke="#000" strokeWidth="1" />
    </svg>
  );
}

function Panel({ title, children, className }: Kids & { title: string; className: string }) {
  return (
    <div className={`w-[184px] rounded-[5px] bg-[#3d3d3d] text-[#d0d0d0] ${className}`}>
      <div className="flex h-[26px] items-center pl-[7px] text-white">
        <Ic n="chevBig" className="size-[12px] text-[#b0b0b0]" />
        <span className="ml-[3px]">{title}</span>
        <Grip />
      </div>
      {children}
    </div>
  );
}

function Field({ label, value, kind, icon, className = "", dim, round = "rounded-[4px]" }: { label: string; value: string; kind: "num" | "drop"; icon?: string; className?: string; dim?: boolean; round?: string }) {
  return (
    <div className={`flex h-[18px] items-center ${dim ? "text-[#7a7a7a]" : ""} ${className}`}>
      <span className="w-[71px] whitespace-nowrap text-right">{label}</span>
      {kind === "num" ? (
        <div className={`ml-[10px] flex h-[18px] w-[94px] items-center justify-center pr-px tracking-[-0.050px] ${round} ${dim ? "bg-[#484848]" : "bg-[#545454] text-[#e6e6e6]"}`}>{value}</div>
      ) : (
        <div className={`ml-[10px] flex h-[18px] w-[94px] items-center whitespace-nowrap bg-[#282828] text-[#e6e6e6] ${round} ${icon ? "pl-[3px]" : "pl-[7px]"}`}>
          {icon && <Ic n={icon} className="mr-[7px] size-[15px]" />}
          {value}
          <Ic n="chev" className="ml-auto size-[13px]" />
        </div>
      )}
    </div>
  );
}

function ChannelEnd() {
  return (
    <div className="ml-auto flex w-[60px] shrink-0 items-center text-white">
      <Ic n="wrenchF" className="mr-[4px] size-[13px]" />
      <Ic n="check" className="mr-[4px] size-[12px] text-[#c6c6c6]" />
      <Ic n="lock" className="size-[15px] text-[#a0a0a0]" />
    </div>
  );
}

function GraphEditor() {
  return (
    <div className="ml-px mt-[3px] flex h-[478px] w-[1446px] shrink-0 flex-col overflow-hidden rounded-t-[6px] bg-[#181818]">
      <div className="flex h-[25px] shrink-0 items-center bg-[#343434] pl-2 pr-2 pt-px text-[#e2e2e2]">
        <IconDrop n="graph" />
        <span className="ml-[12px] w-[39px]">View</span>
        <span className="w-[46px]">Select</span>
        <span className="w-[48px]">Marker</span>
        <span className="w-[56px]">Channel</span>
        <span className="w-[32px]">Key</span>
        <div className="flex h-[18px] w-[107px] items-center gap-px overflow-hidden rounded-[4px]">
          <div className="flex h-full w-[87px] items-center bg-[#4772b3] pl-[4px] text-white">
            <Ic n="norm" />
            <span className="ml-[8px]">Normalize</span>
          </div>
          <div className="flex h-full flex-1 items-center justify-center bg-[#4772b3]">
            <Ic n="refresh" />
          </div>
        </div>
        <div className="ml-auto flex items-center">
          <div className="flex h-[18px] w-[58px] gap-px overflow-hidden rounded-[4px]">
            <div className="flex w-[18px] items-center justify-center bg-[#4772b3] text-white"><Ic n="arrow" className="size-[14px]" /></div>
            <div className="flex w-[19px] items-center justify-center bg-[#545454]"><Ic n="selBox" /></div>
            <div className="flex w-[19px] items-center justify-center bg-[#545454]"><Ic n="warn" /></div>
          </div>
          <div className="ml-[7px] flex h-[18px] w-[18px] items-center justify-center rounded-[4px] bg-[#545454]"><Ic n="ghost" className="size-[14px]" /></div>
          <IconDrop n="funnel" className="ml-[7px] w-[31px]" />
          <IconDrop n="dotBox" className="ml-[6px] w-[31px]" />
          <Box className="ml-[6px] h-5 w-[111px] justify-between whitespace-nowrap pl-[7px] pr-px">
            Nearest Frame
            <Ic n="chev" className="size-[13px]" />
          </Box>
          <Box className="ml-[6px] h-5 w-[51px] opacity-90">
            <div className="flex h-5 w-[18px] items-center justify-center bg-[#545454]"><Ic n="prop" className="size-[14px]" /></div>
            <Ic n="curveA" className="ml-[4px] size-[15px] text-[#9a9a9a]" />
            <Ic n="chev" className="size-[12px] text-[#555]" />
          </Box>
        </div>
      </div>
      <div className="flex h-[453px]">
        <div className="w-[208px] shrink-0 rounded-bl-[5px] bg-[#1d1d1d]">
          <div className="ml-[2px] mt-[2.500px] flex h-[18.500px] w-[204px] overflow-hidden rounded-[3px] border border-[#3c3c3c] bg-[#1a1a1a]">
            <div className="flex flex-1 items-center pl-[3px] text-[#ddd]"><Ic n="search" /></div>
            <div className="flex w-[22px] items-center justify-center bg-[#545454] text-[#ddd]"><Ic n="swap" /></div>
          </div>
          <div className="mt-[4px] flex flex-col gap-[2px] text-[#c8c8c8]">
            <div className="flex h-4 items-center rounded-tl-[4px] bg-[#184e80] pl-[1px] text-[#ffaf29]">
              <Ic n="triDown" className="size-[13px] text-white" />
              <Ic n="empty" className="ml-[3px] size-[14px] text-[#b8c0c8]" />
              <Ic n="pin" className="ml-[4px] size-[14px] text-[#a8b8c8]" />
              <Ic n="eye" className="ml-[3px] size-[14px] text-white" />
              <span className="ml-[4px]">Empty.001</span>
            </div>
            <div className="ml-[6px] flex h-4 items-center bg-[#102b50] pl-[2px]">
              <Ic n="triDown" className="size-[13px] text-white" />
              <Ic n="actionIc" className="ml-[2px] size-[15px]" />
              <span className="ml-[5px] tracking-[-0.5px]">Empty.001Action</span>
            </div>
            <div className="ml-[13px] flex h-4 items-center rounded-tl-[4px] bg-[#1a332c] pl-[2px]">
              <Ic n="triDown" className="size-[13px] text-white" />
              <Ic n="pin" className="ml-[3px] size-[14px] text-[#a8a8a8]" />
              <Ic n="eye" className="ml-[3px] size-[14px] text-white" />
              <span className="ml-[4px] w-[79px] whitespace-nowrap tracking-[-0.850px]">Object Transform</span>
              <ChannelEnd />
            </div>
            {[
              ["X Euler Rotation", "bg-[#ff3352]", "text-[#ffaf29]"],
              ["Y Euler Rotation", "bg-[#8bdc00]", ""],
              ["Z Euler Rotation", "bg-[#2890ff]", ""],
            ].map(([t, bg, col]) => (
              <div key={t} className="ml-5 flex h-4 items-center bg-[#111]">
                <div className={`h-4 w-[6px] ${bg}`} />
                <Ic n="eye" className="ml-[4px] size-[14px] text-white" />
                <span className={`ml-[5px] whitespace-nowrap ${col}`}>{t}</span>
                <ChannelEnd />
              </div>
            ))}
          </div>
        </div>
        <GraphCanvas />
        <div className="relative w-[199px] shrink-0 bg-[#303030] pl-[8px] pt-[2px]">
          <Panel title="Active F-Curve" className="h-[158px]">
            <div className="mt-[8px] flex h-[18px] items-center pl-[11px]">
              <Ic n="object" className="size-[14px]" />
              <span className="ml-[9px]">X Euler Rotation</span>
            </div>
            <div className="ml-[9px] mt-[7px] flex h-[18px] w-[166px] items-center rounded-[3px] bg-[#2f2f2f] pl-[4px] text-[#858585]">
              <Ic n="rna" className="size-[14px]" />
              <span className="ml-[7px]">rotation_euler</span>
            </div>
            <Field label="RNA Array…" value="0" kind="num" dim className="mt-[4px]" />
            <Field label="Display C…" value="Auto XYZ to …" kind="drop" className="mt-[7px]" />
            <Field label="Handle S…" value="Continuous …" kind="drop" className="mt-[7px]" />
          </Panel>
          <Panel title="Active Keyframe" className="mt-[2px] h-[171px]">
            <Field label="Interpolation" value="Linear" kind="drop" icon="linear" className="mt-[8px]" />
            <Field label="Key Frame" value="151.000" kind="num" className="mt-[7px]" round="rounded-t-[4px]" />
            <Field label="Value" value="360°" kind="num" className="mt-[1.500px]" round="rounded-b-[4px]" />
            <Field label="Left Handl…" value="Auto Cla…" kind="drop" icon="auto" className="mt-[7.500px]" round="rounded-t-[4px]" />
            <Field label="Frame" value="101.000" kind="num" className="mt-[1.500px]" round="rounded-none" />
            <Field label="Value" value="360°" kind="num" className="mt-[1.500px]" round="rounded-b-[4px]" />
          </Panel>
          <div className="absolute left-[9px] top-[177px] h-[45px] w-[187px] rounded-[2px] border-4 border-[#f00]" />
        </div>
        <div className="flex w-5 flex-col gap-[4.500px] bg-[#181818] pt-[5px]">
          <SideTab label="F-Curve" h="h-[54px]" active />
          <SideTab label="Modifiers" h="h-[60px]" />
          <SideTab label="View" h="h-[39.500px]" />
        </div>
      </div>
    </div>
  );
}

/* ---------- outliner ---------- */
type Row = { d: number; tri?: string; icon: string; col: string; t: string; w?: string; extra?: [string, string, boolean?][]; sel?: boolean; boxed?: boolean; vis?: boolean; chk?: boolean };
const OR = "text-[#c9834b]";
const GR = "text-[#0fab80]";
const BL = "text-[#5c7fc9]";
const ROWS: Row[] = [
  { d: 0, icon: "coll", col: "text-[#dedede]", t: "Scene Collection" },
  { d: 1, tri: "triDown", icon: "coll", col: "text-[#e8e8e8]", t: "Collection", boxed: true, vis: true, chk: true },
  { d: 2, tri: "triRight", icon: "cam", col: OR, t: "Camera", w: "w-[58px]", extra: [["camLine", GR, true]], vis: true },
  { d: 2, tri: "triRight", icon: "curve", col: OR, t: "Circle", w: "w-[48px]", extra: [["curveLine", GR]], vis: true },
  { d: 2, icon: "empty", col: OR, t: "Empty", vis: true },
  { d: 2, tri: "triRight", icon: "empty", col: "text-[#e0916a]", t: "Empty.001", w: "w-[75px]", extra: [["action", "text-[#a8b4cc]"]], sel: true, boxed: true, vis: true },
  { d: 2, tri: "triRight", icon: "bulb", col: OR, t: "Light", w: "w-[45px]", extra: [["bulbLine", GR]], vis: true },
  { d: 2, tri: "triDown", icon: "curve", col: OR, t: "Plane", vis: true },
  { d: 3, icon: "curveLine", col: GR, t: "Plane" },
  { d: 3, tri: "triRight", icon: "constraint", col: BL, t: "Constraints", w: "w-[76px]", extra: [["follow", BL]] },
  { d: 3, tri: "triRight", icon: "wrench", col: BL, t: "Modifiers", w: "w-[65px]", extra: [["bend", BL], ["bend", BL, true], ["dots", "text-[#8a8a8a]"]] },
];
const PAD = ["pl-0", "pl-5", "pl-10", "pl-[60px]"];

function Outliner() {
  return (
    <div className="relative h-[308px] w-[301px] shrink-0 overflow-hidden rounded-[6px] bg-[#282828]">
      <div className="flex h-[25px] items-center bg-[#2b2b2b] pl-2 text-[#e2e2e2]">
        <IconDrop n="tree" />
        <IconDrop n="stack" className="ml-[6px] w-[31px]" />
        <Box className="ml-[17px] h-5 w-[110px] !bg-[#1d1d1d] pl-[4px]"><Ic n="search" /></Box>
        <IconDrop n="funnel" className="ml-[34px] w-[31px]" />
        <Box className="ml-[6px] h-5 w-[20px] justify-center !bg-[#545454]"><Ic n="newColl" /></Box>
      </div>
      <div className="mt-px">
        {ROWS.map((r, i) => (
          <div key={i} className={`flex h-5 items-center ${PAD[r.d]} ${r.sel ? "bg-[#334d80]" : i % 2 ? "bg-[#2b2b2b]" : "bg-[#282828]"}`}>
            <div className="flex w-5 shrink-0 justify-center pr-px text-[#b8b8b8]">{r.tri && <Ic n={r.tri} className="size-[11px]" />}</div>
            <div className={`flex h-[18px] w-5 shrink-0 items-center justify-center rounded-[4px] ${r.col} ${r.boxed ? (r.sel ? "border border-[#8fa0c0] bg-[#66799f]" : "border border-[#808080] bg-[#555]") : ""}`}>
              <Ic n={r.icon} className="size-[14px]" />
            </div>
            <span className={`ml-1 whitespace-nowrap pt-[2px] ${r.w ?? ""} ${r.sel ? "text-[#ffaf29]" : "text-[#c4c4c4]"}`}>{r.t}</span>
            {r.extra?.map(([n, c, b], k) => (
              <div key={k} className={`flex h-[18px] w-5 shrink-0 items-center justify-center rounded-[4px] ${c} ${b ? "border border-[#808080] bg-[#555]" : ""}`}>
                <Ic n={n} className="size-[14px]" />
              </div>
            ))}
            {r.vis && (
              <div className="ml-auto mr-[9.500px] flex text-[#e0e0e0]">
                <div className="flex w-5 items-center justify-center text-white">{r.chk && <Ic n="check" className="size-[11px]" />}</div>
                <div className="flex w-5 items-center justify-center"><Ic n="eye" className="size-[14px]" /></div>
                <div className="flex w-5 items-center justify-center"><Ic n="photo" className="size-[14px]" /></div>
              </div>
            )}
          </div>
        ))}
        <div className="h-5 bg-[#2b2b2b]" />
        <div className="h-5 bg-[#282828]" />
        <div className="h-5 bg-[#2b2b2b]" />
      </div>
      <div className="absolute left-[29px] top-[71px] h-[170px] w-px bg-[#6a6a6a]" />
      <div className="absolute bottom-[3px] left-2 h-[3px] w-[268px] rounded bg-[#3e3e3e]" />
    </div>
  );
}

/* ---------- properties ---------- */
const PTABS: [string, string, string][] = [
  ["renderP", "text-[#b8b8b8]", "mt-[8px] h-[28px]"],
  ["output", "text-[#b8b8b8]", "h-[28px]"],
  ["stack", "text-[#b8b8b8]", "h-[28px]"],
  ["scene", "text-[#b8b8b8]", "h-[28px]"],
  ["world", "text-[#b5545c]", "h-[28px]"],
  ["collLine", "text-[#dcdcdc]", "mt-[8px] h-[28px]"],
  ["object", "text-[#c9834b]", "mt-[8px] h-[28px]"],
  ["physics", "text-[#5c83d6]", "h-[28px]"],
  ["constraint", "text-[#5c7fc9]", "h-[28px]"],
  ["emptyLine", "text-[#0fab80]", "h-[28px]"],
  ["texture", "text-[#b5545c]", "mt-[8px] h-[28px]"],
];

function Properties() {
  return (
    <div className="mt-[3px] flex h-[649px] w-[301px] flex-col overflow-hidden rounded-[6px] bg-[#303030] text-[#e0e0e0]">
      <div className="flex h-[25px] shrink-0 items-center pl-2">
        <IconDrop n="props" />
        <Box className="ml-[55px] h-5 w-[109px] !bg-[#1d1d1d] pl-[4px]"><Ic n="search" /></Box>
        <Box className="ml-[71px] h-5 w-[20px] justify-center"><Ic n="chev" className="size-[14px]" /></Box>
      </div>
      <div className="flex flex-1">
        <div className="flex w-[28px] shrink-0 flex-col bg-[#1d1d1d] pt-[9px]">
          <div className="ml-[2px] flex h-[26px] items-center rounded-l-[4px] bg-[#303030] pl-[6px]"><Ic n="toolset" /></div>
          {PTABS.map(([n, c, h]) => (
            <div key={n} className={`flex items-center pl-[8px] ${c} ${h}`}><Ic n={n} className="size-[14px]" /></div>
          ))}
        </div>
        <div className="flex-1 pl-[8px]">
          <div className="mt-[6px] flex items-center pl-[6px]">
            <svg viewBox="0 0 24 24" className="size-[24px]" fill="none" stroke="#e6e6e6">{TOOL_SHAPES.select}</svg>
            <span className="ml-[8px]">Select Box</span>
          </div>
          <div className="mt-[9px] pl-[1px]"><SelectModes /></div>
          <div className="mt-[11px] h-[126px] w-[258px] overflow-hidden rounded-[4px] bg-[#353535]">
            <div className="h-[50px] bg-[#3d3d3d]">
              <div className="flex h-[25px] items-center pl-[6px] pt-px">
                <Ic n="chevBig" className="size-[12px] text-[#b0b0b0]" />
                <span className="ml-[4px]">Options</span>
                <Grip />
              </div>
              <div className="flex h-[25px] items-center pl-[20px] pt-px">
                <Ic n="chevBig" className="size-[12px] text-[#b0b0b0]" />
                <span className="ml-[4px]">Transform</span>
              </div>
            </div>
            <div className="pt-[8px]">
              {["Origins", "Locations", "Parents"].map((t, i) => (
                <div key={t} className="flex h-5 items-center">
                  <span className="w-[100px] text-right">{i === 0 ? "Affect Only" : ""}</span>
                  <div className="ml-[9.500px] size-[13px] rounded-[3px] bg-[#545454]" />
                  <span className="ml-[4px]">{t}</span>
                </div>
              ))}
            </div>
          </div>
          <div className="mt-[2px] flex h-[25px] w-[258px] items-center rounded-[4px] bg-[#3d3d3d] pl-[6px] pt-px">
            <Ic n="chevRight" className="size-[12px] text-[#b0b0b0]" />
            <span className="ml-[4px]">Workspace</span>
            <Grip />
          </div>
        </div>
      </div>
    </div>
  );
}

/* ---------- top bar ---------- */
const TABS: [string, string][] = [
  ["Modeling", "w-[65px]"],
  ["Sculpting", "w-[66px]"],
  ["UV Editing", "w-[72px]"],
  ["Texture Paint", "w-[82px]"],
  ["Shading", "w-[59px]"],
  ["Animation", "w-[70px]"],
  ["Rendering", "w-[69px]"],
  ["Compositing", "w-[82px]"],
  ["Geometry Nodes", "w-[104px]"],
  ["Scripting", "w-[60px]"],
];

function IdBlock({ icon, name, w, pin }: { icon: string; name: string; w: string; pin?: boolean }) {
  return (
    <Box className={`h-[20px] text-[#e2e2e2] ${w}`}>
      <div className="flex h-full w-[31px] items-center justify-center border-r border-[#404040]">
        <Ic n={icon} />
        <Ic n="chev" className="size-[13px]" />
      </div>
      <div className="flex h-full flex-1 items-center justify-between bg-[#1d1d1d] pl-[7px] pr-[4px]">
        {name}
        {pin && <Ic n="pin" className="size-[14px] text-[#777]" />}
      </div>
      <div className="flex h-full w-5 items-center justify-center bg-[#545454]"><Ic n="copy" /></div>
      <div className="flex h-full w-5 items-center justify-center bg-[#303030] text-[#666]"><Ic n="x" className="size-[12px]" /></div>
    </Box>
  );
}

export default function App() {
  return (
    <div className="flex h-[1039px] w-[1753px] flex-col overflow-hidden border-l border-t border-[#1c4a6e] bg-[#161616] font-['DejaVu_Sans',sans-serif] text-[11px] leading-[15px] tracking-[-0.57px]">
      <div className="flex h-[30px] shrink-0 items-center bg-white pl-[9px] text-black">
        <svg viewBox="0 0 16 16" className="size-[15px]" fill="none" stroke="#ea7600">
          <circle cx="10" cy="9.500" r="4.200" strokeWidth="2.200" />
          <circle cx="10" cy="9.500" r="1.800" fill="#265787" stroke="none" />
          <path d="M8.500 2 13 5.500M2 5.500h8M1 12l6-5" strokeWidth="2" strokeLinecap="round" />
        </svg>
        <span className="ml-[5px] whitespace-nowrap font-['Open_Sans',sans-serif] text-[12px] tracking-[-0.335px]">
          Blender* [C:\Users\Катя\OneDrive\Рабочий стол\Практика магистратура\блендер\3\3_7.blend]
        </span>
        <div className="ml-auto flex items-center gap-[35.500px] pr-[18px]">
          <div className="h-px w-[10px] bg-black" />
          <div className="size-[10px] border border-black" />
          <svg viewBox="0 0 10 10" className="size-[10px]" stroke="#000" strokeWidth="1"><path d="M0 0l10 10M10 0 0 10" /></svg>
        </div>
      </div>
      <div className="flex h-[27px] shrink-0 border-b-2 border-[#161616] bg-[#1d1d1d] text-[#e2e2e2]">
        <div className="flex h-[27px] items-center pl-[9px]">
          <Ic n="blender" className="size-[16px]" />
          <span className="ml-[10px] w-[32px]">File</span>
          <span className="w-[34px]">Edit</span>
          <span className="w-[49px]">Render</span>
          <span className="w-[54px]">Window</span>
          <span className="w-[48px]">Help</span>
        </div>
        <div className="mt-[6px] flex h-[19px] w-[52px] items-center rounded-t-[4px] bg-[#303030] pl-[9px] pt-[2px] text-white">Layout</div>
        <div className="mt-[6px] flex h-[19px] items-center pl-[11px] pt-[2px] text-[#999]">
          {TABS.map(([t, w]) => (
            <span key={t} className={`whitespace-nowrap ${w}`}>{t}</span>
          ))}
          <svg viewBox="0 0 10 10" className="size-[10px]" stroke="currentColor"><path d="M5 0v10M0 5h10" /></svg>
        </div>
        <div className="ml-auto mr-[8px] mt-[3px] flex h-[20px] gap-[5px]">
          <IdBlock icon="scene" name="Scene" w="w-[192px]" pin />
          <IdBlock icon="stack" name="ViewLayer" w="w-[192px]" />
        </div>
      </div>
      <div className="flex h-[960px] shrink-0">
        <div className="flex w-[1447px] shrink-0 flex-col">
          <Viewport />
          <GraphEditor />
        </div>
        <div className="ml-[3px] flex w-[301px] shrink-0 flex-col">
          <Outliner />
          <Properties />
        </div>
      </div>
      <div className="flex flex-1 items-center bg-[#1d1d1d] pl-[10px] pt-px text-[#8f8f8f]">
        <Ic n="mouseL" />
        <span className="ml-[9px] w-[188px] whitespace-nowrap">Выделить ключевые кадры</span>
        <Ic n="mouseM" />
        <span className="ml-[9px] w-[188px] whitespace-nowrap">Панорамировать вид</span>
        <Ic n="mouseR" />
        <span className="ml-[9px] whitespace-nowrap tracking-[-0.640px]">F-Curve Context Menu</span>
        <span className="ml-auto mr-[8px] tracking-normal">3.4.1</span>
      </div>
    </div>
  );
}
